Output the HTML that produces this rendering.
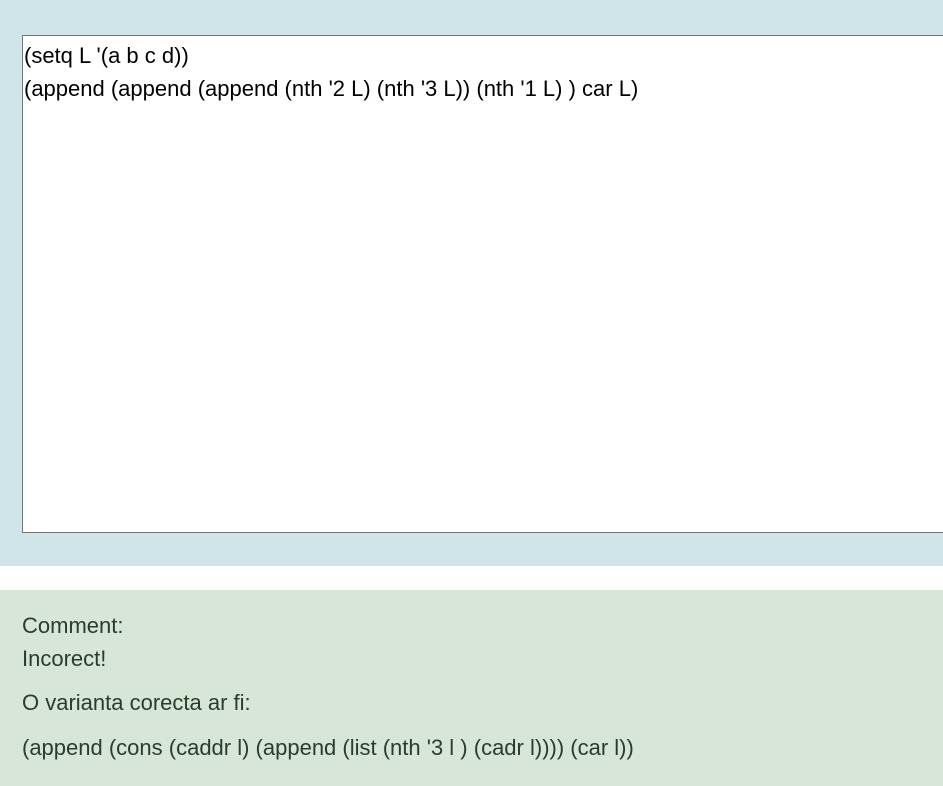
<!DOCTYPE html>
<html><head><meta charset="utf-8"><style>
html,body{margin:0;padding:0;width:943px;height:786px;overflow:hidden;background:#fff;font-family:"Liberation Sans",sans-serif;}
.top{position:absolute;left:0;top:0;width:943px;height:566px;background:#cfe5e9;}
.ta{position:absolute;left:22px;top:35px;width:940px;height:498px;background:#fff;border:1px solid #767676;box-sizing:border-box;padding:3px 1px;font-size:22px;line-height:33px;color:#000;white-space:pre;}
.bot{position:absolute;left:0;top:590px;width:943px;height:196px;background:#d8e6d8;color:#2a3d2c;font-size:22px;}
.bot div{position:absolute;left:22px;white-space:pre;line-height:26px;}
</style></head><body>
<div class="top"><div class="ta">(setq L '(a b c d))
(append (append (append (nth '2 L) (nth '3 L)) (nth '1 L) ) car L)</div></div>
<div class="bot">
<div style="top:23px">Comment:</div>
<div style="top:56px">Incorect!</div>
<div style="top:100px">O varianta corecta ar fi:</div>
<div style="top:145px">(append (cons (caddr l) (append (list (nth '3 l ) (cadr l)))) (car l))</div>
</div>
</body></html>
